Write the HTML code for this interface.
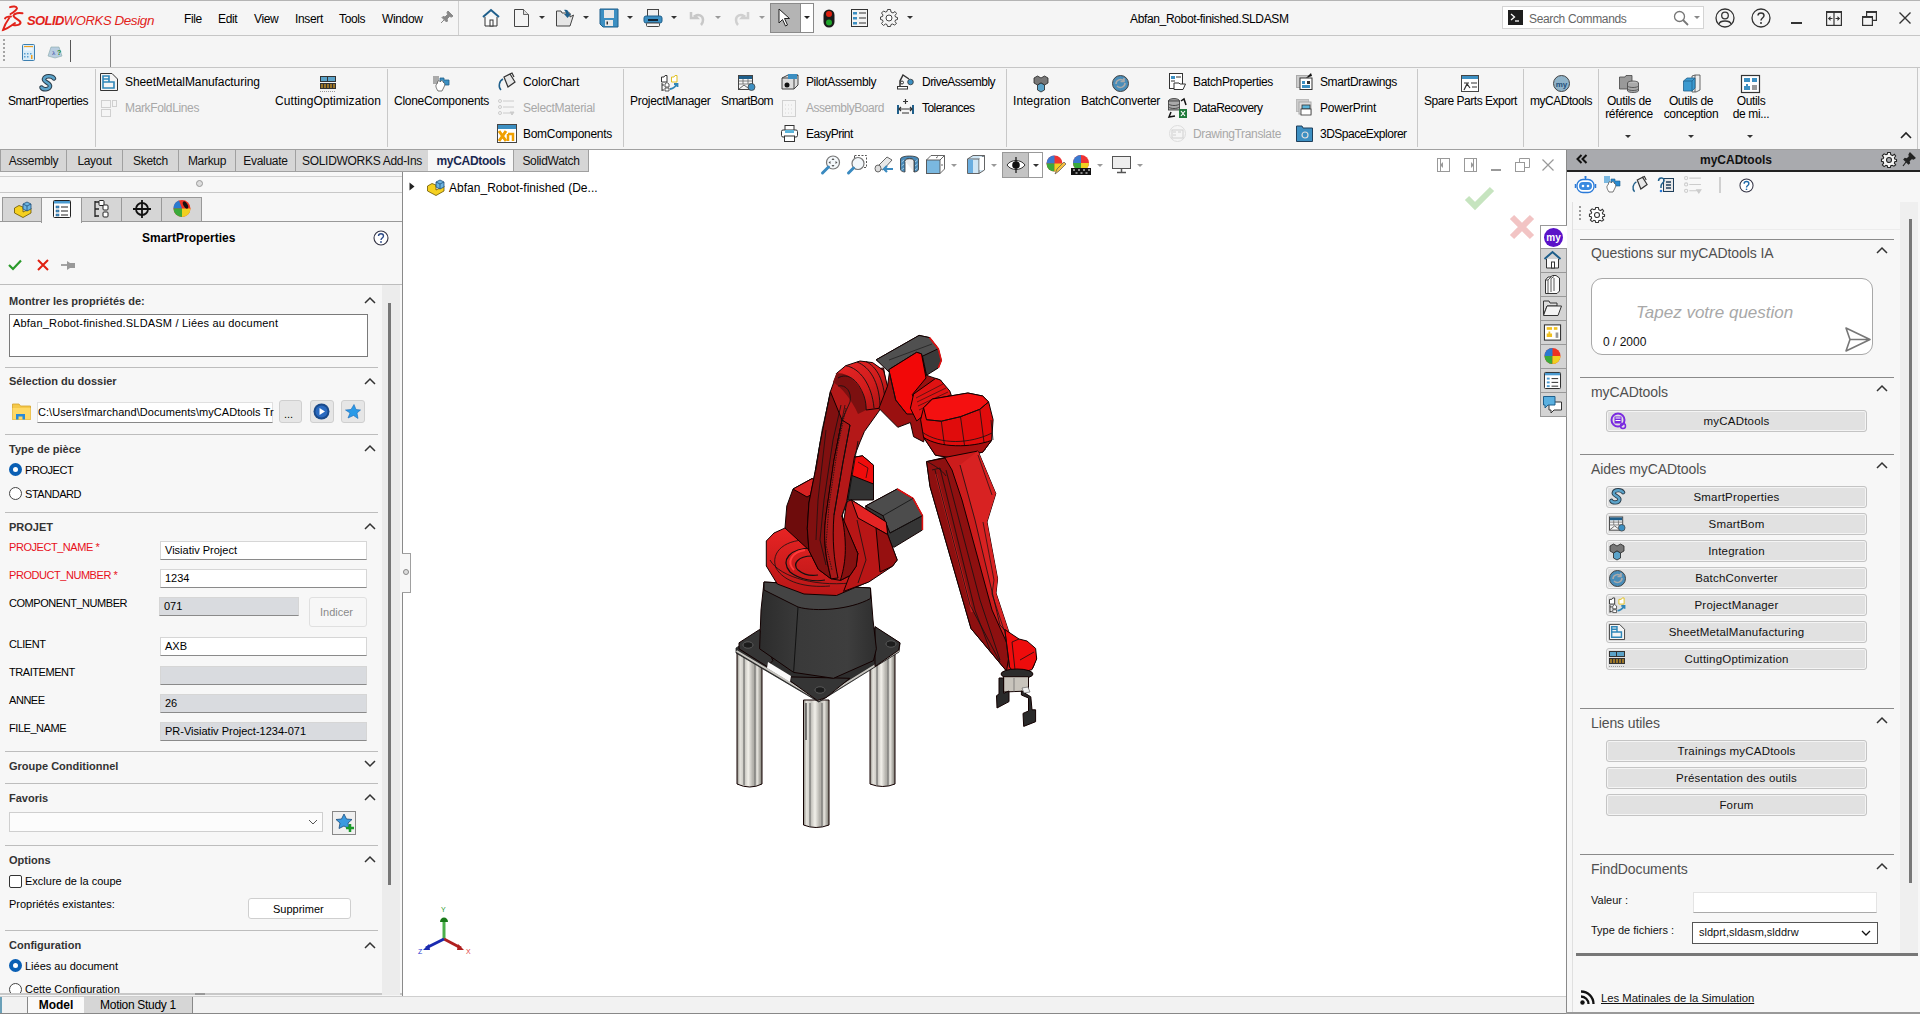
<!DOCTYPE html>
<html><head><meta charset="utf-8">
<style>
*{box-sizing:border-box;margin:0;padding:0}
html,body{width:1920px;height:1014px;overflow:hidden;background:#f5f5f5;font-family:"Liberation Sans",sans-serif;font-size:12px;color:#000}
.a{position:absolute;white-space:nowrap}
.t{position:absolute;white-space:nowrap;line-height:14px;letter-spacing:-0.35px}
.g{color:#a8a8a8}
.vs{position:absolute;width:1px;background:#c8c8c8}
.hs{position:absolute;height:1px;background:#c8c8c8}
svg{position:absolute;overflow:visible}
.dd{position:absolute;width:0;height:0;border-left:3px solid transparent;border-right:3px solid transparent;border-top:3px solid #666}
</style></head><body>

<!-- top border -->
<div class="a" style="left:0;top:0;width:1920px;height:1px;background:#b4b4b4"></div>

<!-- ===== TITLE BAR ===== -->
<div id="titlebar" class="a" style="left:0;top:1px;width:1920px;height:34px;background:#f5f5f5"></div>
<!-- logo -->
<svg style="left:1px;top:5px" width="24" height="24" viewBox="0 0 24 24"><path d="M9 2.2 C12 1 15.5 1.3 16 3.2 C15.5 5 13 7 9.5 9" fill="none" stroke="#e2231a" stroke-width="1.9" stroke-linecap="round"/><path d="M21.5 8.3 C18 7.5 13.5 8 12.5 10.5 C12 13 19 14.5 19.5 17.5 C19.5 20 16 20.5 12 20" fill="none" stroke="#e2231a" stroke-width="2" stroke-linecap="round"/><path d="M10 11.5 C6 11.5 4.5 12.5 4 13.5 M8.5 12.5 C6 16 3.5 20 2 25 C6 24 10 21 14 18" fill="none" stroke="#e2231a" stroke-width="1.9" stroke-linecap="round"/></svg>
<div class="a" style="left:27px;top:12.5px;font-size:13px;line-height:15px;font-weight:bold;font-style:italic;color:#e2231a;letter-spacing:-0.6px">SOLID<span style="font-weight:normal;letter-spacing:-0.3px">WORKS</span> <span style="font-weight:normal;font-size:13.5px;letter-spacing:-0.4px">Design</span></div>
<div class="t" style="left:184px;top:12px">File</div>
<div class="t" style="left:218px;top:12px">Edit</div>
<div class="t" style="left:254px;top:12px">View</div>
<div class="t" style="left:295px;top:12px">Insert</div>
<div class="t" style="left:339px;top:12px">Tools</div>
<div class="t" style="left:382px;top:12px">Window</div>
<svg style="left:440px;top:10px" width="14" height="14" viewBox="0 0 14 14"><path d="M8 1 L13 6 L11.5 7 L9.5 6.5 L7 9 L7.5 11 L6.5 12 L2 7.5 L3 6.5 L5 7 L7.5 4.5 L7 2.5 Z M4 10 L1 13" fill="#888" stroke="#888" stroke-width="1"/></svg>
<div class="a" style="left:458px;top:1px;width:1px;height:34px;background:#d0d0d0"></div>
<!-- home -->
<svg style="left:482px;top:9px" width="18" height="18" viewBox="0 0 18 18"><path d="M1 8 L9 1 L17 8" fill="none" stroke="#1f5f8b" stroke-width="2"/><path d="M3 8 V17 H15 V8" fill="#fafafa" stroke="#333" stroke-width="1"/><rect x="8" y="11" width="3" height="6" fill="#fff" stroke="#333" stroke-width="1"/></svg>
<!-- new -->
<svg style="left:514px;top:9px" width="15" height="18" viewBox="0 0 15 18"><path d="M0.5 0.5 H9.5 L14.5 5.5 V17.5 H0.5 Z" fill="#f4f4f4" stroke="#444" stroke-width="1"/><path d="M9.5 0.5 V5.5 H14.5" fill="#ddd" stroke="#444" stroke-width="0.8"/></svg>
<div class="dd" style="left:539px;top:16px;border-top-color:#333"></div>
<!-- open -->
<svg style="left:556px;top:9px" width="18" height="18" viewBox="0 0 18 18"><path d="M0.5 2 H5 L6 4 H14 V8 L17.5 6 L14 17 H0.5 Z" fill="#e6e6e6" stroke="#444" stroke-width="1"/><path d="M8 1 C11 0 13 2 13 5 L15 5 L11.5 9 L8 5 L10 5 C10 3 9 2 8 1 Z" fill="#1f5f8b"/></svg>
<div class="dd" style="left:583px;top:16px;border-top-color:#333"></div>
<!-- save -->
<svg style="left:600px;top:9px" width="18" height="18" viewBox="0 0 18 18"><path d="M0 0 H18 V18 H3 L0 15 Z" fill="#3c8fc2"/><path d="M0 0 H18 V18 H3 L0 15 Z" fill="none" stroke="#1f5f8b" stroke-width="1"/><rect x="4" y="1" width="10" height="8" fill="#e8e8e8"/><rect x="5" y="11" width="8" height="6" fill="#e8e8e8"/><rect x="6.5" y="12.5" width="1.5" height="3" fill="#333"/></svg>
<div class="dd" style="left:627px;top:16px;border-top-color:#333"></div>
<!-- print -->
<svg style="left:644px;top:9px" width="18" height="18" viewBox="0 0 18 18"><rect x="3.5" y="0.5" width="11" height="7" fill="#f0f0f0" stroke="#444" stroke-width="1"/><rect x="0" y="7" width="18" height="7" rx="2" fill="#3c8fc2" stroke="#1f5f8b" stroke-width="1"/><rect x="4" y="10" width="10" height="2" fill="#123"/><rect x="2.5" y="14" width="13" height="3.5" rx="1" fill="#f4f4f4" stroke="#444" stroke-width="1"/></svg>
<div class="dd" style="left:671px;top:16px;border-top-color:#333"></div>
<!-- undo redo -->
<svg style="left:689px;top:10px" width="17" height="16" viewBox="0 0 17 16"><path d="M2 2 V8 H8 L6 6 C9 4 14 5 14 10 C14 12 13 14 12 15" fill="none" stroke="#c8c8c8" stroke-width="2.5"/></svg>
<div class="dd" style="left:715px;top:16px;border-top-color:#999"></div>
<svg style="left:733px;top:10px" width="17" height="16" viewBox="0 0 17 16"><path d="M15 2 V8 H9 L11 6 C8 4 3 5 3 10 C3 12 4 14 5 15" fill="none" stroke="#d0d0d0" stroke-width="2.5"/></svg>
<div class="dd" style="left:759px;top:16px;border-top-color:#999"></div>
<!-- select -->
<div class="a" style="left:770px;top:3px;width:44px;height:30px;border:1px solid #8a8a8a;background:#fff"></div>
<div class="a" style="left:771px;top:4px;width:30px;height:28px;background:#b4b4b4;border-right:1px solid #8a8a8a"></div>
<svg style="left:778px;top:8px" width="14" height="19" viewBox="0 0 14 19"><path d="M1 1 V15 L4.5 11.5 L7.5 18 L9.5 17 L6.5 10.5 L11.5 10.5 Z" fill="#fff" stroke="#222" stroke-width="1"/></svg>
<div class="dd" style="left:804px;top:16px;border-top-color:#222"></div>
<!-- traffic light -->
<svg style="left:823px;top:9px" width="12" height="19" viewBox="0 0 12 19"><rect x="0.5" y="0.5" width="11" height="18" rx="5.5" fill="#1a1a1a"/><circle cx="6" cy="5" r="3" fill="#e02010"/><circle cx="6" cy="13.5" r="3" fill="#1fa52a"/></svg>
<!-- list -->
<svg style="left:851px;top:9px" width="17" height="18" viewBox="0 0 17 18"><rect x="0.5" y="0.5" width="16" height="17" fill="#f4f4f4" stroke="#333" stroke-width="1"/><rect x="2" y="3" width="4" height="2.5" fill="#3c8fc2"/><rect x="2" y="8" width="4" height="2.5" fill="#3c8fc2"/><rect x="2" y="13" width="4" height="2.5" fill="#3c8fc2"/><path d="M8 4 H15 M8 9 H15 M8 14 H15" stroke="#333" stroke-width="1"/></svg>
<!-- gear -->
<svg style="left:880px;top:9px" width="18" height="18" viewBox="0 0 18 18"><path d="M7.5 0.5 H10.5 L11 3 L13 4 L15 2.5 L16.5 4.5 L15 6.5 L15.5 8 L17.5 8.5 V10.5 L15.5 11 L15 12.5 L16.5 14.5 L14.5 16 L12.5 15 L11 15.5 L10.5 17.5 H7.5 L7 15.5 L5.5 15 L3.5 16.5 L1.5 14.5 L3 12.5 L2.5 11 L0.5 10.5 V8 L2.5 7.5 L3 6 L1.5 4 L3.5 2 L5.5 3 L7 2.5 Z" fill="#f4f4f4" stroke="#444" stroke-width="1"/><circle cx="9" cy="9" r="3" fill="#fff" stroke="#444" stroke-width="1"/></svg>
<div class="dd" style="left:907px;top:16px;border-top-color:#333"></div>
<!-- title -->
<div class="t" style="left:1130px;top:12px">Abfan_Robot-finished.SLDASM</div>
<!-- search -->
<div class="a" style="left:1502px;top:6px;width:202px;height:23px;background:#fff;border:1px solid #d4d4d4"></div>
<svg style="left:1508px;top:10px" width="15" height="15" viewBox="0 0 15 15"><rect width="15" height="15" fill="#1e1e1e"/><path d="M3 4 L6.5 7 L3 10" fill="none" stroke="#fff" stroke-width="1.3"/><path d="M7 11 H11" stroke="#fff" stroke-width="1.3"/></svg>
<div class="t" style="left:1529px;top:12px;color:#666">Search Commands</div>
<svg style="left:1673px;top:10px" width="16" height="16" viewBox="0 0 16 16"><circle cx="6.5" cy="6.5" r="5" fill="none" stroke="#777" stroke-width="1.3"/><path d="M10 10 L15 15" stroke="#777" stroke-width="1.8"/></svg>
<div class="dd" style="left:1694px;top:16px;border-top-color:#888"></div>
<!-- right icons -->
<svg style="left:1715px;top:8px" width="20" height="20" viewBox="0 0 20 20"><circle cx="10" cy="10" r="9" fill="none" stroke="#333" stroke-width="1.3"/><circle cx="10" cy="7.5" r="3.3" fill="none" stroke="#333" stroke-width="1.3"/><path d="M4 16 C5 12 15 12 16 16" fill="none" stroke="#333" stroke-width="1.3"/></svg>
<svg style="left:1751px;top:8px" width="20" height="20" viewBox="0 0 20 20"><circle cx="10" cy="10" r="9" fill="none" stroke="#333" stroke-width="1.3"/><path d="M7 7.5 C7 4 13 4 13 7.5 C13 10 10 10 10 12.5" fill="none" stroke="#333" stroke-width="1.5"/><circle cx="10" cy="15" r="1" fill="#333"/></svg>
<div class="a" style="left:1791px;top:22px;width:11px;height:2px;background:#333"></div>
<svg style="left:1826px;top:11px" width="16" height="15" viewBox="0 0 16 15"><rect x="0.6" y="0.6" width="14.8" height="13.8" fill="none" stroke="#333" stroke-width="1.2"/><path d="M0.6 1.2 H15.4" stroke="#333" stroke-width="1.5"/><path d="M8 1 V14" stroke="#333" stroke-width="1.2"/><path d="M2.5 7.5 H6.5 M13.5 7.5 H9.5" stroke="#333" stroke-width="1.2"/><path d="M2 7.5 L4.5 5 V10 Z M14 7.5 L11.5 5 V10 Z" fill="#333"/></svg>
<svg style="left:1862px;top:11px" width="16" height="15" viewBox="0 0 16 15"><rect x="0.6" y="5.6" width="9.8" height="8.8" fill="#f5f5f5" stroke="#333" stroke-width="1.2"/><path d="M0.6 6.2 H10.4" stroke="#333" stroke-width="1.5"/><path d="M4.6 5.6 V0.6 H14.4 V9.4 H10.4" fill="none" stroke="#333" stroke-width="1.2"/><path d="M4.6 1.2 H14.4" stroke="#333" stroke-width="1.5"/></svg>
<svg style="left:1899px;top:12px" width="12" height="12" viewBox="0 0 12 12"><path d="M0.5 0.5 L11.5 11.5 M11.5 0.5 L0.5 11.5" stroke="#333" stroke-width="1.4"/></svg>
<div class="a" style="left:0;top:35px;width:1920px;height:1px;background:#c6c6c6"></div>

<!-- ===== ROW2 ===== -->
<svg style="left:2px;top:38px" width="4" height="26" viewBox="0 0 4 26"><g fill="#888"><circle cx="2" cy="2" r="1"/><circle cx="2" cy="6" r="1"/><circle cx="2" cy="10" r="1"/><circle cx="2" cy="14" r="1"/><circle cx="2" cy="18" r="1"/><circle cx="2" cy="22" r="1"/></g></svg>
<svg style="left:22px;top:44px" width="13" height="17" viewBox="0 0 13 17"><rect x="0.5" y="0.5" width="12" height="16" rx="1" fill="#d8ecf8" stroke="#3c7fb0"/><rect x="2" y="2" width="9" height="1.2" fill="#f0a020"/><rect x="2.5" y="3.5" width="8" height="3" fill="#eef7ff"/><g fill="#5b9fd0"><rect x="2" y="9" width="1.5" height="1.5"/><rect x="5" y="9" width="1.5" height="1.5"/><rect x="8" y="9" width="1.5" height="1.5"/><rect x="2" y="12" width="1.5" height="1.5"/><rect x="5" y="12" width="1.5" height="1.5"/></g><rect x="9" y="11" width="1.5" height="4" fill="#f0a020"/></svg>
<svg style="left:47px;top:46px" width="16" height="12" viewBox="0 0 16 12"><path d="M1 10 L4 1 H12 L15 10 L8 12 Z" fill="#b8cde0" stroke="#8aa" stroke-width="0.6"/><text x="5" y="9" font-family="Liberation Serif" font-size="7" fill="#2a3a9a">λ</text><text x="10" y="9" font-family="Liberation Sans" font-size="7" font-weight="bold" fill="#1a8a2a">?</text></svg>
<div class="a" style="left:70px;top:40px;width:1px;height:22px;background:#555"></div>
<div class="a" style="left:110px;top:36px;width:1px;height:31px;background:#888"></div>
<div class="a" style="left:0;top:67px;width:1920px;height:1px;background:#c6c6c6"></div>

<!-- ===== RIBBON ===== -->
<div class="a" style="left:1917px;top:68px;width:1px;height:81px;background:#c8c8c8"></div>
<div class="vs" style="left:95px;top:69px;height:78px"></div>
<div class="vs" style="left:387px;top:69px;height:78px"></div>
<div class="vs" style="left:623px;top:69px;height:78px"></div>
<div class="vs" style="left:1006px;top:69px;height:78px"></div>
<div class="vs" style="left:1417px;top:69px;height:78px"></div>
<div class="vs" style="left:1523px;top:69px;height:78px"></div>
<div class="vs" style="left:1598px;top:69px;height:78px"></div>
<!-- large labels -->
<div class="t" style="left:8px;top:94px;letter-spacing:-0.45px">SmartProperties</div>
<div class="t" style="left:275px;top:94px;letter-spacing:0.07px">CuttingOptimization</div>
<div class="t" style="left:394px;top:94px;letter-spacing:-0.29px">CloneComponents</div>
<div class="t" style="left:630px;top:94px;letter-spacing:-0.3px">ProjectManager</div>
<div class="t" style="left:721px;top:94px;letter-spacing:-0.6px">SmartBom</div>
<div class="t" style="left:1013px;top:94px;letter-spacing:0.07px">Integration</div>
<div class="t" style="left:1081px;top:94px;letter-spacing:-0.31px">BatchConverter</div>
<div class="t" style="left:1424px;top:94px;letter-spacing:-0.47px">Spare Parts Export</div>
<div class="t" style="left:1530px;top:94px;letter-spacing:-0.47px">myCADtools</div>
<div class="t" style="left:1599px;top:95px;width:60px;text-align:center;line-height:13px">Outils de<br>référence</div>
<div class="t" style="left:1661px;top:95px;width:60px;text-align:center;line-height:13px">Outils de<br>conception</div>
<div class="t" style="left:1721px;top:95px;width:60px;text-align:center;line-height:13px">Outils<br>de mi...</div>
<div class="dd" style="left:1625px;top:135px;border-top-color:#333"></div>
<div class="dd" style="left:1688px;top:135px;border-top-color:#333"></div>
<div class="dd" style="left:1747px;top:135px;border-top-color:#333"></div>
<svg style="left:1900px;top:132px" width="12" height="7" viewBox="0 0 12 7"><path d="M1 6 L6 1 L11 6" fill="none" stroke="#222" stroke-width="1.6"/></svg>
<!-- small labels -->
<div class="t" style="left:125px;top:75px;letter-spacing:-0.08px">SheetMetalManufacturing</div>
<div class="t g" style="left:125px;top:101px;letter-spacing:-0.36px">MarkFoldLines</div>
<div class="t" style="left:523px;top:75px;letter-spacing:-0.2px">ColorChart</div>
<div class="t g" style="left:523px;top:101px;letter-spacing:-0.29px">SelectMaterial</div>
<div class="t" style="left:523px;top:127px;letter-spacing:-0.29px">BomComponents</div>
<div class="t" style="left:806px;top:75px;letter-spacing:-0.41px">PilotAssembly</div>
<div class="t g" style="left:806px;top:101px;letter-spacing:-0.47px">AssemblyBoard</div>
<div class="t" style="left:806px;top:127px;letter-spacing:-0.5px">EasyPrint</div>
<div class="t" style="left:922px;top:75px;letter-spacing:-0.54px">DriveAssembly</div>
<div class="t" style="left:922px;top:101px;letter-spacing:-0.55px">Tolerances</div>
<div class="t" style="left:1193px;top:75px;letter-spacing:-0.36px">BatchProperties</div>
<div class="t" style="left:1193px;top:101px;letter-spacing:-0.55px">DataRecovery</div>
<div class="t g" style="left:1193px;top:127px;letter-spacing:-0.35px">DrawingTranslate</div>
<div class="t" style="left:1320px;top:75px;letter-spacing:-0.39px">SmartDrawings</div>
<div class="t" style="left:1320px;top:101px;letter-spacing:-0.27px">PowerPrint</div>
<div class="t" style="left:1320px;top:127px;letter-spacing:-0.5px">3DSpaceExplorer</div>
<!-- ribbon icons -->
<!-- S smartproperties -->
<svg style="left:39px;top:75px" width="18" height="18" viewBox="0 0 18 18"><path d="M15 3.5 C13 0.5 6 0.5 5 4 C4 7 12 8 11 11.5 C10 15 4 15 2.5 12.5" fill="none" stroke="#2a3c4a" stroke-width="4.5" stroke-linecap="round"/><path d="M15 3.5 C13 0.5 6 0.5 5 4 C4 7 12 8 11 11.5 C10 15 4 15 2.5 12.5" fill="none" stroke="#5ba3c9" stroke-width="2.5" stroke-linecap="round"/></svg>
<!-- sheetmetal -->
<svg style="left:100px;top:73px" width="18" height="18" viewBox="0 0 18 18"><path d="M0.5 0.5 H12 L17.5 6 V17.5 H0.5 Z" fill="#f4f4f4" stroke="#333" stroke-width="1"/><path d="M3 3 H9 V9 H14 V15 H3 Z M3 9 H9 M3 6 H9" fill="none" stroke="#2f86b8" stroke-width="1.6"/></svg>
<svg style="left:101px;top:100px" width="17" height="17" viewBox="0 0 17 17"><rect x="0.5" y="0.5" width="9" height="7" fill="none" stroke="#d0d0d0"/><rect x="11.5" y="0.5" width="4" height="6" fill="none" stroke="#d0d0d0"/><rect x="0.5" y="9.5" width="9" height="7" fill="none" stroke="#d0d0d0"/></svg>
<!-- cutting -->
<svg style="left:320px;top:76px" width="16" height="17" viewBox="0 0 16 17"><rect x="0" y="0" width="16" height="6" fill="#333"/><rect x="1" y="1" width="6" height="4" fill="#5ba3c9"/><rect x="8" y="1" width="7" height="4" fill="#5ba3c9"/><rect x="0" y="7" width="16" height="6" fill="#333"/><path d="M2 8 V12 M5 8 V12 M8 8 V12 M11 8 V12 M14 8 V12" stroke="#e0a020" stroke-width="1.2"/><path d="M0 15.5 H16" stroke="#999" stroke-dasharray="1 1"/></svg>
<!-- clone -->
<svg style="left:433px;top:75px" width="18" height="17" viewBox="0 0 18 17"><rect x="0" y="1" width="6" height="8" fill="#aaa"/><path d="M7 3 H11 V5 H16 V10 H7 Z" fill="#3c8fc2" stroke="#1f5f8b" stroke-width="0.8"/><path d="M5 16 C3 13 2 10 4 9 L5 6 C6 5 7 6 7 7 L8 6 C9 5 10 6 10 7 L11 8 C12 8 12 10 11 12 L9 16 Z" fill="#fff" stroke="#555" stroke-width="0.8"/></svg>
<!-- colorchart -->
<svg style="left:497px;top:73px" width="19" height="18" viewBox="0 0 19 18"><path d="M7 4 L13 1 L18 9 L11 14 Z" fill="#e8e8e8" stroke="#333" stroke-width="1.2"/><path d="M13 1 L15 0 L17 4" fill="none" stroke="#333" stroke-width="1.2"/><path d="M6 6 C2 8 1 14 4 17" fill="none" stroke="#1f5f8b" stroke-width="1.5"/></svg>
<svg style="left:498px;top:99px" width="17" height="17" viewBox="0 0 17 17"><circle cx="2" cy="2" r="1.5" fill="none" stroke="#ccc"/><circle cx="2" cy="8" r="1.5" fill="none" stroke="#ccc"/><circle cx="2" cy="14" r="1.5" fill="none" stroke="#ccc"/><path d="M5 2 H16 M5 8 H16 M5 14 H12 M12 13 L16 13 L14 16 Z" stroke="#ccc" fill="#ccc"/></svg>
<svg style="left:497px;top:124px" width="20" height="19" viewBox="0 0 20 19"><rect x="0.5" y="0.5" width="19" height="18" fill="#fff" stroke="#444"/><rect x="1" y="1" width="18" height="4" fill="#3c8fc2"/><path d="M2 7 L9 17 M9 7 L2 17" stroke="#f0a000" stroke-width="3"/><path d="M11 10 V17 M11 10 H16 V17" fill="none" stroke="#f0a000" stroke-width="2.5"/></svg>
<!-- projectmanager -->
<svg style="left:661px;top:75px" width="18" height="17" viewBox="0 0 18 17"><path d="M0.5 7 V2 H3 L4 0.5 H6 V7 Z" fill="#fff" stroke="#333"/><path d="M10.5 7 V2 H13 L14 0.5 H16 V7 Z" fill="#fff" stroke="#e0c020"/><path d="M1 8 V16 M1 10 H3 M1 15 H3" stroke="#333"/><path d="M4 12 V9 L6 7.5 L8 9 V12 Z M4 16 V13 H8 V16 Z" fill="#fff" stroke="#333" stroke-width="0.8"/><path d="M9 14 C12 14 14 12 16 9 M13 9 H16.5 V12" fill="none" stroke="#2f86b8" stroke-width="1.8"/></svg>
<!-- smartbom -->
<svg style="left:738px;top:75px" width="18" height="17" viewBox="0 0 18 17"><rect x="0.5" y="0.5" width="14" height="14" fill="#f4f4f4" stroke="#444"/><rect x="1" y="1" width="13" height="3" fill="#1f5f8b"/><path d="M1 6 H14 M1 9 H14 M5 4 V9 M10 4 V9" stroke="#666" stroke-width="0.8"/><path d="M1 14 L6 10 L10 13" fill="none" stroke="#666"/><circle cx="13.5" cy="12" r="3.5" fill="#3c8fc2" stroke="#444" stroke-width="0.8"/></svg>
<!-- pilotassembly -->
<svg style="left:781px;top:73px" width="18" height="18" viewBox="0 0 18 18"><path d="M1 5 L7 2 L17 2 V12 L13 16 H1 Z" fill="#ddd" stroke="#444"/><path d="M1 5 H13 L17 2 M13 5 V16" fill="none" stroke="#444"/><rect x="7" y="1" width="9" height="5" fill="#3c8fc2"/><circle cx="6" cy="12" r="2.5" fill="#111"/></svg>
<svg style="left:782px;top:99px" width="15" height="18" viewBox="0 0 15 18"><rect x="0.5" y="1.5" width="13" height="16" fill="none" stroke="#d0d0d0"/><path d="M3 6 H11 M3 10 H11 M3 14 H11" stroke="#d8d8d8" stroke-dasharray="1 2"/></svg>
<svg style="left:781px;top:125px" width="17" height="17" viewBox="0 0 17 17"><rect x="4" y="0.5" width="9" height="5" fill="#fff" stroke="#333"/><rect x="0.5" y="5" width="16" height="7" rx="1.5" fill="#fff" stroke="#333"/><rect x="4" y="5" width="9" height="3" fill="#5bb4d9"/><rect x="3.5" y="11" width="10" height="5.5" fill="#fff" stroke="#333"/></svg>
<!-- driveassembly -->
<svg style="left:897px;top:73px" width="17" height="17" viewBox="0 0 17 17"><rect x="0.5" y="13.5" width="10" height="2.5" fill="#fff" stroke="#333"/><path d="M3 13 V8 L6 2 L12 6" fill="none" stroke="#333" stroke-width="1.5"/><circle cx="5" cy="9.5" r="1.5" fill="none" stroke="#333"/><circle cx="13.5" cy="9" r="2.8" fill="#3c8fc2" stroke="#333" stroke-width="0.8"/></svg>
<svg style="left:897px;top:99px" width="17" height="15" viewBox="0 0 17 15"><path d="M1 6 V15 M16 6 V15" stroke="#1f5f8b" stroke-width="2"/><path d="M2 10 H15 M4 8 L2 10 L4 12 M13 8 L15 10 L13 12 M8.5 0 V5 M6 2.5 H11 M5 14 H12" fill="none" stroke="#333" stroke-width="1.2"/></svg>
<!-- integration -->
<svg style="left:1033px;top:75px" width="16" height="17" viewBox="0 0 16 17"><path d="M1 3 L4.5 1 L8 3 L11.5 1 L15 3 V8 L11.5 10 L8 8 L4.5 10 L1 8 Z" fill="#777" stroke="#222" stroke-width="0.8"/><path d="M4.5 10 L8 8 L11.5 10 V15 L8 17 L4.5 15 Z" fill="#5ba3c9" stroke="#222" stroke-width="0.8"/></svg>
<!-- batchconverter -->
<svg style="left:1112px;top:75px" width="17" height="17" viewBox="0 0 17 17"><circle cx="8.5" cy="8.5" r="8" fill="#4a8db8" stroke="#444" stroke-width="1"/><path d="M4 9 C4 5 9 3 12 6 M12 3 V6.5 H8.5 M13 8 C13 12 8 14 5 11" fill="none" stroke="#aaa" stroke-width="1.6"/></svg>
<!-- batchproperties -->
<svg style="left:1169px;top:73px" width="17" height="17" viewBox="0 0 17 17"><rect x="0.5" y="0.5" width="13" height="15" fill="#fff" stroke="#333"/><rect x="2" y="3" width="4" height="3" fill="#3c8fc2"/><path d="M7 4 H12 M2 8 H6" stroke="#333"/><path d="M5 10 H10 L11 11 H16.5 L14 16.5 H5 Z" fill="#fff" stroke="#333"/></svg>
<svg style="left:1168px;top:98px" width="19" height="20" viewBox="0 0 19 20"><ellipse cx="6" cy="3" rx="5.5" ry="2.5" fill="#999" stroke="#333" stroke-width="0.8"/><rect x="0.5" y="3" width="11" height="9" fill="#aaa" stroke="#333" stroke-width="0.8"/><path d="M0.5 6 C3 8 9 8 11.5 6 M0.5 9 C3 11 9 11 11.5 9" fill="none" stroke="#333" stroke-width="0.8"/><rect x="11" y="11" width="8" height="9" fill="#1f7a3a"/><path d="M13 13 L17 18 M17 13 L13 18" stroke="#fff" stroke-width="1.2"/><path d="M3 14 L1 19 L7 18 M13 3 L16 1 L18 7" fill="none" stroke="#111" stroke-width="1.5"/></svg>
<svg style="left:1169px;top:125px" width="17" height="17" viewBox="0 0 17 17"><circle cx="8.5" cy="8.5" r="8" fill="none" stroke="#ddd"/><rect x="3" y="5" width="11" height="8" fill="none" stroke="#d0d0d0"/><path d="M4 7 H7 M9 7 H12 M4 10 H7" stroke="#d0d0d0"/></svg>
<!-- smartdrawings -->
<svg style="left:1296px;top:73px" width="17" height="17" viewBox="0 0 17 17"><rect x="0.5" y="2.5" width="12" height="12" fill="#ccc" stroke="#aaa"/><rect x="4" y="5" width="12" height="11.5" fill="#fff" stroke="#333"/><rect x="6" y="8" width="3" height="3" fill="#3c8fc2"/><rect x="11" y="8" width="3" height="3" fill="#333"/><rect x="6" y="12" width="8" height="3" fill="#3c8fc2"/><path d="M10 5 L15 0 L16 3" fill="#111"/></svg>
<svg style="left:1296px;top:99px" width="17" height="17" viewBox="0 0 17 17"><rect x="0.5" y="0.5" width="12" height="12" fill="#ccc" stroke="#bbb"/><rect x="3" y="3" width="12" height="12" fill="#ddd" stroke="#aaa"/><rect x="6" y="6" width="8" height="4" fill="#5bb4d9" stroke="#333" stroke-width="0.8"/><rect x="5" y="10" width="10" height="6" fill="#fff" stroke="#333" stroke-width="0.8"/></svg>
<svg style="left:1296px;top:125px" width="17" height="17" viewBox="0 0 17 17"><path d="M0.5 1 H6 L7 3 H16.5 V16.5 H0.5 Z" fill="#3c8fc2" stroke="#1f3f5b" stroke-width="1"/><circle cx="9" cy="10" r="3" fill="none" stroke="#ddd" stroke-width="1.2"/></svg>
<!-- spare parts -->
<svg style="left:1461px;top:75px" width="18" height="17" viewBox="0 0 18 17"><rect x="0.5" y="0.5" width="17" height="16" fill="#fff" stroke="#444"/><rect x="1" y="1" width="16" height="3" fill="#3c8fc2"/><path d="M3 15 L6 9 L9 13 M3 8 H8 M10 8 H16 M11 12 H16" fill="none" stroke="#333" stroke-width="1.2"/></svg>
<!-- mycadtools -->
<svg style="left:1553px;top:75px" width="17" height="17" viewBox="0 0 17 17"><circle cx="8.5" cy="8.5" r="8" fill="#8fb3c9" stroke="#444" stroke-width="1"/><text x="8.5" y="11.5" font-family="Liberation Sans" font-size="8" font-weight="bold" text-anchor="middle" fill="#1f4f7b">my</text></svg>
<!-- outils -->
<svg style="left:1619px;top:75px" width="20" height="18" viewBox="0 0 20 18"><path d="M0.5 2 H6 L7 0.5 H13 V14 H0.5 Z" fill="#999" stroke="#444" stroke-width="0.8"/><ellipse cx="14" cy="8" rx="5.5" ry="2" fill="#bbb" stroke="#444" stroke-width="0.8"/><path d="M8.5 8 V16 C10 18 18 18 19.5 16 V8 M8.5 11 C10 13 18 13 19.5 11 M8.5 14 C10 16 18 16 19.5 14" fill="#aaa" stroke="#444" stroke-width="0.8"/></svg>
<svg style="left:1683px;top:75px" width="18" height="18" viewBox="0 0 18 18"><path d="M9 1 L12 0 H17 V15 L13 17 H9 Z" fill="#eee" stroke="#444" stroke-width="0.8"/><path d="M12 0 V17" stroke="#444" stroke-width="0.8"/><path d="M0.5 6 L4 3 H12 V13 L9 16 H0.5 Z" fill="#3c9ad0" stroke="#1f5f8b" stroke-width="0.8"/><path d="M0.5 6 H9 L12 3 M9 6 V16" fill="none" stroke="#1f5f8b" stroke-width="0.8"/></svg>
<svg style="left:1741px;top:75px" width="19" height="18" viewBox="0 0 19 18"><rect x="0.5" y="0.5" width="18" height="17" fill="#fff" stroke="#333" stroke-width="1.2"/><rect x="3" y="3" width="6" height="4" fill="#3c8fc2"/><rect x="11" y="3" width="5" height="4" fill="#3c8fc2"/><path d="M3 15 V11 H5 V9 H7 V11 H9 V15 Z" fill="#3c8fc2"/><rect x="11" y="10" width="5" height="5" fill="#999"/></svg>

<div id="gfx" class="a" style="left:402px;top:150px;width:1165px;height:847px;background:#fff;border-left:1px solid #8a8a8a"></div>
<!-- ROBOT -->
<svg style="left:0;top:0" width="1920" height="1014" viewBox="0 0 1920 1014">
<defs>
<linearGradient id="leg" x1="0" x2="1" y1="0" y2="0"><stop offset="0" stop-color="#8a8880"/><stop offset="0.12" stop-color="#e6e4de"/><stop offset="0.3" stop-color="#c4c2bc"/><stop offset="0.45" stop-color="#f2f0ea"/><stop offset="0.65" stop-color="#aeaca6"/><stop offset="0.82" stop-color="#e0ded8"/><stop offset="1" stop-color="#7a7870"/></linearGradient>
<linearGradient id="base" x1="0" x2="1" y1="0" y2="0"><stop offset="0" stop-color="#2c2c2c"/><stop offset="0.35" stop-color="#3a3a3a"/><stop offset="0.75" stop-color="#3e3e3e"/><stop offset="1" stop-color="#2e2e2e"/></linearGradient>
<linearGradient id="disc" x1="0" x2="0" y1="0" y2="1"><stop offset="0" stop-color="#e82424"/><stop offset="1" stop-color="#b81616"/></linearGradient>
<linearGradient id="elb" x1="0" x2="1" y1="0" y2="1"><stop offset="0" stop-color="#e82626"/><stop offset="0.6" stop-color="#d01c1c"/><stop offset="1" stop-color="#a01212"/></linearGradient>
</defs>
<g stroke="#120000" stroke-width="1" stroke-linejoin="round">
<!-- legs -->
<path d="M737 653 H762 V784 Q750 790 737 784 Z" fill="url(#leg)"/>
<path d="M870 651 H895 V784 Q883 789 870 784 Z" fill="url(#leg)"/>
<path d="M803.5 700 H829 V825 Q816 830 803.5 825 Z" fill="url(#leg)"/>
<path d="M744 657 V785 M755 657 V786 M877 655 V785 M888 655 V786 M810 703 V827 M822 703 V827" stroke="#444" stroke-width="0.8"/>
<path d="M806 703 V740" stroke="#333" stroke-width="1.2"/>
<!-- plate -->
<path d="M736 648 L760 633 L876 628 L900 643 L899 652 L818.8 702 L736 653 Z" fill="#2e2e2e" stroke="#222" stroke-width="0.8"/>
<path d="M736.5 651 L818.8 700 L899 650.5" fill="none" stroke="#c8c6c0" stroke-width="2"/>
<path d="M739 642.8 L759.6 629.5 L772.9 660.6 L767 666.5 L739 648.8 Z" fill="#353535"/>
<path d="M790.7 676.9 L849.8 678.3 L826 697.6 L817.3 700.5 L790.7 681.3 Z" fill="#353535"/>
<path d="M875 626.6 L900 642.8 L898.6 650.2 L875 666.5 Z" fill="#353535"/>
<path d="M768 662 L791 676 L790 682 L767 668 Z" fill="#fafafa" stroke="none"/>
<ellipse cx="748" cy="645" rx="5" ry="3.2" fill="#1c1c1c" stroke="#777" stroke-width="0.6"/><ellipse cx="820" cy="690" rx="5" ry="3.2" fill="#1c1c1c" stroke="#777" stroke-width="0.6"/><ellipse cx="891" cy="644" rx="5" ry="3.2" fill="#1c1c1c" stroke="#777" stroke-width="0.6"/>
<!-- base cone -->
<path d="M764 582 L870.5 588 L873 620 L876.4 648.8 L873.5 660.6 L833.5 678.3 L793.6 672.4 L759.6 648.8 L761 610 Z" fill="url(#base)"/>
<path d="M764 582 L870.5 588 L870.5 598.5 C850 610 815 612 798 607 L764 590 Z" fill="#444"/>
<path d="M798 607 L793.6 672.4" fill="none" stroke="#111"/>
<!-- turntable disc -->
<path d="M766.3 541 L774 533 L785 528 L860 540 C880 555 885 570 868 582 L836.5 595.5 L804 594 L777.3 584 L766.3 566 Z" fill="url(#disc)"/>
<path d="M770 560 C780 578 820 588 858 582" fill="none" stroke="#111" stroke-width="0.8"/>
<path d="M812 548 C790 548 780 560 790 572 C800 580 815 582 825 580" fill="none" stroke="#111" stroke-width="1.2"/>
<path d="M812 556 C798 556 792 564 798 570 C804 575 812 576 818 575" fill="none" stroke="#111" stroke-width="1.2"/>
<path d="M813 540 C785 538 770 552 776 568 C784 582 805 588 830 586" fill="none" stroke="#111" stroke-width="0.8"/>
<path d="M805 550 C792 552 786 562 794 570" fill="none" stroke="#ff3a3a" stroke-width="2"/>
<!-- link1 dark left box -->
<path d="M786.8 506 L793 489 L812 478.6 L840 492 L843 522 L808.9 550 L785 528 Z" fill="#6e0c0c"/>
<path d="M793 489 L812 478.6 L826 486 L807 497 Z" fill="#d82222"/>
<!-- small black box behind -->
<path d="M849 458 L862.5 455.8 L873.5 465.2 L873.5 500 L846 500 Z" fill="#333"/>
<path d="M850 458 L862.5 455.8 L873.5 465.2 L873.5 484 L850 474.7 Z" fill="#f00c0c"/>
<path d="M858 462 L868 468 L866 478" fill="none" stroke="#111" stroke-width="0.7"/>
<!-- lower motor -->
<path d="M865.6 506 L897.2 489 L913 498.4 L922.4 515.7 L922.4 530 L894 547.3 L870 535 Z" fill="#353535"/>
<path d="M865.6 506 L897.2 489 L913 498.4 L922.4 515.7 L890 533 L883 515.7 Z" fill="#4c4c4c"/>
<path d="M897.2 489 L913 498.4 L922.4 515.7 L922.4 530" fill="none" stroke="#e01010" stroke-width="1.6"/>
<path d="M883 515.7 L913 498.4 M890 533 L922.4 515.7" fill="none" stroke="#111" stroke-width="0.8"/>
<!-- right red box -->
<path d="M846.7 501.5 L851.5 500 L886.2 522 L887.7 534.6 L897.2 560 L892.5 566.2 L868.8 582 L843.6 591.4 L857.8 553.6 L843.6 522 Z" fill="#b81616"/>
<path d="M851.5 500 L886.2 522 L887.7 534.6 L876 528 L858 518 Z" fill="#e42424"/>
<path d="M876 528 L887.7 534.6 L897.2 560 L892.5 566.2 L880 572 Z" fill="#961010"/>
<path d="M857 520 L866 560 L858 583" fill="none" stroke="#111" stroke-width="0.8"/>
<!-- link2 lower arm -->
<path d="M836.3 375.3 L830.4 391.6 L825.9 413.8 L820 443.3 L815.2 471.5 L808.9 503 L807.3 528.3 L808.9 550.4 L818.3 569.3 L831 578.8 L840.4 580.4 L849.9 575.6 L856.2 566.2 L857.8 553.6 L843.6 522 L842 515.7 L846.7 501.5 L854.6 455.8 L860 441.9 L864.4 431.5 L879.2 410.8 L888 396 L883.6 367.9 Z" fill="#b41818"/>
<path d="M830.4 391.6 L825.9 413.8 L820 443.3 L815.2 471.5 L808.9 503 L807.3 528.3 L808.9 550.4 L818.3 569.3 L831 578.8 C828 565 822 545 826 515 L834 460 L842 420 Z" fill="#801010"/>
<path d="M842 420 L834 460 L826 515 C822 545 828 565 831 578.8 L838 578 C834 560 832 540 834 515 L843 462 L850 425 Z" fill="#a81818"/>
<path d="M850 425 L843 462 L834 515 M858 441 L848 500 L842 516" fill="none" stroke="#111" stroke-width="0.9"/>
<path d="M826 430 L818 500 L816 540 M845 405 L838 440" fill="none" stroke="#111" stroke-width="0.7"/>
<path d="M842 516 L857.8 553.6 L856.2 566.2 L849.9 575.6 L840.4 580.4 C845 565 848 548 842 516 Z" fill="#861010"/>
<!-- elbow disc -->
<path d="M836.3 373.6 L845.7 365.7 L860 361 L872.6 362.6 L883.6 370.5 L887.5 386.2 L886 400.4 L878.9 408.3 L866.2 410 C858 400 850 388 836.3 373.6 Z" fill="url(#elb)"/>
<path d="M836.3 373.6 C845 372 855 378 862 392 C866 400 866.2 405 866.2 410 L858 414 C852 400 842 388 833 382 Z" fill="#7c1010" stroke="none"/>
<path d="M838 378 C848 372 858 380 864 396 C866 402 866 406 866.2 410" fill="none" stroke="#111" stroke-width="0.9"/>
<path d="M845.7 365.7 C860 368 872 385 874 408 M857 362 C870 367 879 382 880 405 M866 361.5 C877 367 884 380 885 402" fill="none" stroke="#111" stroke-width="0.9"/>
<path d="M838 386 C846 384 852 392 850 402 L842 420" fill="none" stroke="#111" stroke-width="0.8"/>
<!-- upper motor -->
<path d="M876.2 359.8 L919.1 335.4 L929.5 337.6 L938.3 348.7 L941.3 360.5 L938.3 367.9 L926.5 375.3 L922 354 L889 370 Z" fill="#3a3a3a"/>
<path d="M876.2 359.8 L919.1 335.4 L929.5 337.6 L938.3 348.7 L889 372 Z" fill="#505050"/>
<path d="M889 360 L932 344" stroke="#222" stroke-width="0.8"/>
<path d="M929.5 337.6 L938.3 348.7 L941.3 360.5 L938.3 367.9" fill="none" stroke="#e01010" stroke-width="1.6"/>
<!-- bracket -->
<path d="M878.9 408.3 L887.5 386.2 L889.9 368.9 L916.7 352.3 L921.5 353.9 L926.2 375.2 L935.6 378.4 L940.4 380 L951.4 395.7 L924.6 414.6 L926 431 L923.6 441.9 L913.6 436.7 L910.4 422.5 L897.8 427.3 L888.3 417.8 Z" fill="#9a1010"/>
<path d="M888.8 369.7 L916.7 352.3 L921.5 353.9 L926 378 L912.3 394.6 L920.6 414 L906.8 414 L895.7 400 Z" fill="#f20808"/>
<path d="M913.6 394.1 L935.6 378.4 L940.4 380 L949.8 391 L951.4 395.7 L924.6 414.6 L916.7 421 L910.4 408.3 Z" fill="#e01212"/>
<path d="M916 398 L943 384 M917 402 L946 388 M918 406 L948 392 M919 410 L950 395" fill="none" stroke="#111" stroke-width="0.6"/>
<path d="M888.8 369.7 L895.7 400 L906.8 414" fill="none" stroke="#111" stroke-width="0.8"/>
<!-- forearm drum -->
<path d="M923.6 407.8 L932.4 399 L967.9 393 L982.7 396 L988.6 401.9 L993.1 419.7 L991.6 440.4 L982.7 452.2 L953.1 458.1 L935.4 455.2 L923.6 437.4 L920.6 419.7 Z" fill="#e00c0c"/>
<path d="M932.4 399 L967.9 393 L982.7 396 L988.6 401.9 L979.8 409.3 L960.5 416.7 L941.3 421.2 L926.5 419.7 L923.6 407.8 Z" fill="#f41010"/>
<path d="M926.5 419.7 L941.3 421.2 L960.5 416.7 L979.8 409.3 L988.6 401.9 M941.3 421.2 L946 457 M960.5 416.7 L966 456 M979.8 409.3 L985 450 M991 420 L993 440 M922 432 C940 445 970 444 992 433" fill="none" stroke="#111" stroke-width="0.8"/>
<path d="M923.6 437.4 L935.4 455.2 L953.1 458.1 L982.7 452.2 L991.6 440.4 C970 448 940 448 923.6 437.4 Z" fill="#a81010"/>
<!-- forearm -->
<path d="M926.6 461.6 L942 458 L978 451 L995.8 493.6 L987 522 L997.6 578.8 L996 593 L1010 635.6 L1024 642.7 L1036.7 657 L1033 667.5 L1017 674.6 L1006.5 671 L971 628.5 L930 486.5 Z" fill="#cc1c1c"/>
<path d="M926.6 461.6 L945 458 L952 470 L962 500 L992 610 L1010 650 L1006.5 671 L971 628.5 L930 486.5 Z" fill="#8e1010"/>
<path d="M932 470 L940 468 L975 610 L990 650 M946 470 L980 600 L1000 660" fill="none" stroke="#111" stroke-width="0.8"/>
<path d="M936 474 L972 612" fill="none" stroke="#c82020" stroke-width="2"/>
<path d="M978 451 L995.8 493.6 L987 522 L997.6 578.8 L996 593 L1010 635.6 L1000 625 L975 520 L960 465 Z" fill="#d82222" stroke="none"/>
<path d="M960 465 L975 520 L1000 625 L1010 635.6" fill="none" stroke="#111" stroke-width="0.8"/>
<path d="M1010 635.6 L1024 642.7 L1036.7 657 L1033 667.5 L1017 674.6 L1014 650 Z" fill="#ee1010"/>
<path d="M1014 650 L1017 674.6 M1022 648 L1026 670" fill="none" stroke="#111" stroke-width="0.8"/>
<!-- detail lines -->
<path d="M841 405 L833 440 L824 500 L820 540 L826 565" fill="none" stroke="#111" stroke-width="0.8"/>
<path d="M846 408 L838 445 L829 505 L826 545 L832 570" fill="none" stroke="#111" stroke-width="0.8" stroke-dasharray="1.5 1"/>
<path d="M830 395 L822 430 L816 470" fill="none" stroke="#111" stroke-width="0.7"/>
<path d="M935 470 L970 605 L1000 662" fill="none" stroke="#111" stroke-width="0.8"/>
<path d="M978 455 L992 495 M983 522 L994 580 L992 594 L1004 630" fill="none" stroke="#111" stroke-width="0.7"/>
<path d="M928 462 C935 466 942 470 946 476" fill="none" stroke="#111" stroke-width="0.8"/>
<!-- gripper -->
<path d="M1004.8 629.5 L1019 639 L1027 641 L1035.6 648.4 L1036.7 659 L1032 669.6 L1015.5 674.4 L1009.5 667 Z" fill="#ee0c0c"/>
<path d="M1009.5 667 L1004.8 629.5 M1015.5 674.4 L1012 642 L1019 639 M1020 660 L1034 652" fill="none" stroke="#111" stroke-width="0.8"/>
<ellipse cx="1017" cy="674" rx="16" ry="5" fill="#2c2c2c"/>
<path d="M1003.6 676.7 L1028.5 676.7 L1028.5 691 L1003.6 692 Z" fill="#c8c4bc"/>
<path d="M1014 678 V692" stroke="#666" stroke-width="0.7"/>
<path d="M999 678 L1003.6 678 L1003.6 693.3 L1009 691 L1009 701.6 L997 708 L996.5 695.7 L999 694 Z" fill="#2a2a2a"/>
<path d="M1021.4 691 L1030.8 696.8 L1032 709.8 L1035.6 709.8 L1035.6 721.7 L1023.7 726.4 L1023 713.4 L1028.5 711 L1028.5 698 L1021.4 695 Z" fill="#2a2a2a"/>
<path d="M1022 688 L1028 687 L1030 692 L1024 693 Z" fill="#eee" stroke="#555" stroke-width="0.6"/>
</g>
</svg>
<!-- ===== TAB BAR ===== -->
<div class="a" style="left:0;top:149px;width:1920px;height:1px;background:#a0a0a0"></div>
<style>
.tab{position:absolute;top:150px;height:22px;background:#d6d6d6;border:1px solid #a0a0a0;border-top:none;line-height:22px;text-align:center;font-size:12px;color:#111;letter-spacing:-0.3px}
.ptab{position:absolute;top:197px;height:25px;width:41px;background:#d6d6d6;border:1px solid #999}
.lt{position:absolute;white-space:nowrap;font-size:11px;line-height:13px;color:#000}
.cp{letter-spacing:-0.45px}
.hd{position:absolute;white-space:nowrap;font-size:11px;line-height:13px;font-weight:bold;color:#333}
.ln{position:absolute;left:5px;width:373px;height:1px;background:#bdbdbd}
.chev{position:absolute;left:364px}
.tb{position:absolute;left:160px;width:207px;height:19px;background:#fff;border:1px solid #d6d6d6;border-bottom:1px solid #8a8a8a}
.tbg{background:#d9dbdf}
.rad{position:absolute;left:9px;width:13px;height:13px;border-radius:50%;border:1px solid #333;background:#fff}
.radon{border:4px solid #0a5fb4}
</style>
<div class="tab" style="left:0;width:67px">Assembly</div>
<div class="tab" style="left:66px;width:57px">Layout</div>
<div class="tab" style="left:122px;width:57px">Sketch</div>
<div class="tab" style="left:178px;width:58px">Markup</div>
<div class="tab" style="left:235px;width:61px">Evaluate</div>
<div class="tab" style="left:295px;width:134px">SOLIDWORKS Add-Ins</div>
<div class="tab" style="left:428px;width:86px;background:#f7f7f7;border-left:none;border-right:none;font-weight:bold;color:#1a2850">myCADtools</div>
<div class="tab" style="left:513px;width:76px">SolidWatch</div>

<!-- ===== LEFT PANEL ===== -->
<div class="a" style="left:0;top:172px;width:402px;height:823px;background:#f7f7f7"></div>
<div class="a" style="left:0;top:176px;width:402px;height:1px;background:#cfcfcf"></div>
<div class="a" style="left:196px;top:180px;width:7px;height:7px;border-radius:50%;background:#ddd;border:1px solid #999"></div>
<div class="a" style="left:0;top:192px;width:402px;height:1px;background:#c8c8c8"></div>
<div class="a" style="left:0;top:221px;width:402px;height:1px;background:#999"></div>
<div class="ptab" style="left:2px"></div>
<div class="ptab" style="left:41px;background:#f7f7f7;border-bottom:none;height:26px"></div>
<div class="ptab" style="left:81px"></div>
<div class="ptab" style="left:121px"></div>
<div class="ptab" style="left:161px"></div>
<!-- panel tab icons -->
<svg style="left:14px;top:200px" width="18" height="18" viewBox="0 0 18 18"><path d="M0.5 8 L5 5.5 L9 7 V12 L17 8 V13 L9 17.5 L0.5 13 Z" fill="#f5d020" stroke="#6a5500" stroke-width="0.8"/><path d="M9 4 L13 2 L17 4 V9 L13 11 L9 9 Z" fill="#6cb4e0" stroke="#1f4f7b" stroke-width="0.8"/><path d="M9 4 L13 6 L17 4 M13 6 V11" fill="none" stroke="#1f4f7b" stroke-width="0.8"/></svg>
<svg style="left:53px;top:200px" width="18" height="18" viewBox="0 0 18 18"><rect x="0.5" y="0.5" width="17" height="17" rx="1" fill="#fff" stroke="#222"/><rect x="1" y="1" width="16" height="2.5" fill="#4a9ad0"/><rect x="3" y="6" width="3" height="2" fill="#4a9ad0" stroke="#1f4f7b" stroke-width="0.5"/><rect x="3" y="10" width="3" height="2" fill="#4a9ad0" stroke="#1f4f7b" stroke-width="0.5"/><rect x="3" y="14" width="3" height="2" fill="#4a9ad0" stroke="#1f4f7b" stroke-width="0.5"/><path d="M8 7 H15 M8 11 H15 M8 15 H15" stroke="#222"/></svg>
<svg style="left:94px;top:200px" width="15" height="18" viewBox="0 0 15 18"><path d="M1 1 V17 M1 2 H5 M1 9 H5 M1 16 H5" stroke="#222" stroke-width="1.3" fill="none"/><rect x="5" y="0.5" width="5" height="5" rx="1" fill="#fff" stroke="#222"/><rect x="9" y="5" width="5" height="5" rx="1" fill="#fff" stroke="#222"/><rect x="9" y="12" width="5" height="5" rx="1" fill="#fff" stroke="#222"/></svg>
<svg style="left:133px;top:200px" width="18" height="18" viewBox="0 0 18 18"><circle cx="9" cy="9" r="6" fill="none" stroke="#111" stroke-width="1.8"/><path d="M9 0 V18 M0 9 H18" stroke="#111" stroke-width="1.8"/></svg>
<svg style="left:173px;top:199px" width="18" height="19" viewBox="0 0 18 19"><circle cx="9" cy="9.5" r="8.5" fill="#e32"/><path d="M9 9.5 L0.5 9.5 A8.5 8.5 0 0 1 6 1.5 Z" fill="#2a7ad0"/><path d="M9 9.5 L0.5 9.5 A8.5 8.5 0 0 0 9 18 Z" fill="#3aaa3a"/><path d="M9 9.5 L9 18 A8.5 8.5 0 0 0 17.5 9.5 Z" fill="#f0d020"/><ellipse cx="12.5" cy="6" rx="2" ry="4" transform="rotate(-30 12.5 6)" fill="#111"/></svg>
<div class="a" style="left:142px;top:231px;font-size:12px;font-weight:bold;line-height:14px">SmartProperties</div>
<svg style="left:373px;top:230px" width="16" height="16" viewBox="0 0 16 16"><circle cx="8" cy="8" r="7" fill="#fff" stroke="#334" stroke-width="1.1"/><path d="M5.5 6 C5.5 3 10.5 3 10.5 6 C10.5 8 8 8 8 10" fill="none" stroke="#2a4a8a" stroke-width="1.4"/><circle cx="8" cy="12" r="0.9" fill="#2a4a8a"/></svg>
<svg style="left:8px;top:259px" width="14" height="12" viewBox="0 0 14 12"><path d="M1 6 L5 10 L13 1.5" fill="none" stroke="#2a9a2a" stroke-width="2.2"/></svg>
<svg style="left:37px;top:259px" width="12" height="12" viewBox="0 0 12 12"><path d="M1 1 L11 11 M11 1 L1 11" stroke="#e02010" stroke-width="2"/></svg>
<svg style="left:61px;top:259px" width="15" height="12" viewBox="0 0 15 12"><path d="M0 6 H8" stroke="#888" stroke-width="1.5"/><path d="M6 2 L9 4 H14 V9 H9 L6 11 Z" fill="#999"/></svg>
<div class="a" style="left:0;top:284px;width:402px;height:1px;background:#bdbdbd"></div>
<!-- scrollbar -->
<div class="a" style="left:388px;top:303px;width:3px;height:582px;background:#777"></div>
<!-- sections -->
<div class="hd" style="left:9px;top:295px">Montrer les propriétés de:</div>
<svg class="chev" style="top:296px" width="12" height="8" viewBox="0 0 12 8"><path d="M1 7 L6 2 L11 7" fill="none" stroke="#333" stroke-width="1.5"/></svg>
<div class="a" style="left:9px;top:314px;width:359px;height:43px;background:#fff;border:1px solid #7a7a7a"></div>
<div class="lt" style="left:13px;top:317px;letter-spacing:0.19px">Abfan_Robot-finished.SLDASM / Liées au document</div>
<div class="ln" style="top:367px"></div>
<div class="hd" style="left:9px;top:375px">Sélection du dossier</div>
<svg class="chev" style="top:377px" width="12" height="8" viewBox="0 0 12 8"><path d="M1 7 L6 2 L11 7" fill="none" stroke="#333" stroke-width="1.5"/></svg>
<svg style="left:12px;top:403px" width="19" height="17" viewBox="0 0 19 17"><path d="M0.5 1 H7 L8.5 3 H18.5 V16.5 H0.5 Z" fill="#f5c94a" stroke="#d4a22a" stroke-width="0.8"/><rect x="0.5" y="5" width="18" height="11.5" fill="#ffd966"/><path d="M4 16.5 V11 H13 V16.5 H10.5 V13.5 H6.5 V16.5 Z" fill="#2a8ad8"/></svg>
<div class="a" style="left:37px;top:402px;width:236px;height:21px;background:#fff;border:1px solid #e0e0e0;border-bottom:1px solid #888"></div>
<div class="lt" style="left:38px;top:406px;font-size:11px;letter-spacing:0.05px">C:\Users\fmarchand\Documents\myCADtools Tr</div>
<div class="a" style="left:279px;top:400px;width:23px;height:23px;background:#e6e6e6;border:1px solid #cfcfcf;border-radius:3px"></div>
<div class="lt" style="left:284px;top:408px">...</div>
<div class="a" style="left:310px;top:400px;width:24px;height:23px;background:#e6e6e6;border:1px solid #cfcfcf;border-radius:3px"></div>
<svg style="left:313px;top:403px" width="17" height="17" viewBox="0 0 17 17"><circle cx="8.5" cy="8.5" r="8" fill="#1a4a8a"/><circle cx="8.5" cy="8.5" r="6" fill="#2a6ac0"/><path d="M6.5 5 L12 8.5 L6.5 12 Z" fill="#fff"/></svg>
<div class="a" style="left:341px;top:400px;width:24px;height:23px;background:#e6e6e6;border:1px solid #cfcfcf;border-radius:3px"></div>
<svg style="left:345px;top:404px" width="16" height="15" viewBox="0 0 16 15"><path d="M9 0.5 L11 5.5 L15.5 6 L12 9 L13 14.5 L8.5 11.5 L3 14 L5 9 L0.5 6 L6 5.5 Z" fill="#2a9ae8" stroke="#1a6ab8" stroke-width="0.6"/></svg>
<div class="ln" style="top:434px"></div>
<div class="hd" style="left:9px;top:443px">Type de pièce</div>
<svg class="chev" style="top:444px" width="12" height="8" viewBox="0 0 12 8"><path d="M1 7 L6 2 L11 7" fill="none" stroke="#333" stroke-width="1.5"/></svg>
<div class="rad radon" style="top:463px"></div>
<div class="lt cp" style="left:25px;top:464px">PROJECT</div>
<div class="rad" style="top:487px;border-color:#444"></div>
<div class="lt cp" style="left:25px;top:488px">STANDARD</div>
<div class="ln" style="top:512px"></div>
<div class="hd" style="left:9px;top:521px">PROJET</div>
<svg class="chev" style="top:522px" width="12" height="8" viewBox="0 0 12 8"><path d="M1 7 L6 2 L11 7" fill="none" stroke="#333" stroke-width="1.5"/></svg>
<div class="lt cp" style="left:9px;top:541px;color:#e8101a">PROJECT_NAME *</div>
<div class="tb" style="top:541px"></div><div class="lt" style="left:165px;top:544px">Visiativ Project</div>
<div class="lt cp" style="left:9px;top:569px;color:#e8101a">PRODUCT_NUMBER *</div>
<div class="tb" style="top:569px"></div><div class="lt" style="left:165px;top:572px">1234</div>
<div class="lt cp" style="left:9px;top:597px">COMPONENT_NUMBER</div>
<div class="tb tbg" style="top:597px;left:159px;width:140px"></div><div class="lt" style="left:164px;top:600px">071</div>
<div class="a" style="left:309px;top:597px;width:58px;height:30px;border:1px solid #e0e0e0;border-radius:3px;background:#f7f7f7"></div>
<div class="lt" style="left:320px;top:606px;color:#8a8a8a">Indicer</div>
<div class="lt cp" style="left:9px;top:638px">CLIENT</div>
<div class="tb" style="top:637px"></div><div class="lt" style="left:165px;top:640px">AXB</div>
<div class="lt cp" style="left:9px;top:666px">TRAITEMENT</div>
<div class="tb tbg" style="top:666px"></div>
<div class="lt cp" style="left:9px;top:694px">ANNEE</div>
<div class="tb tbg" style="top:694px"></div><div class="lt" style="left:165px;top:697px">26</div>
<div class="lt cp" style="left:9px;top:722px">FILE_NAME</div>
<div class="tb tbg" style="top:722px"></div><div class="lt" style="left:165px;top:725px">PR-Visiativ Project-1234-071</div>
<div class="ln" style="top:751px"></div>
<div class="hd" style="left:9px;top:760px">Groupe Conditionnel</div>
<svg class="chev" style="top:760px" width="12" height="8" viewBox="0 0 12 8"><path d="M1 1 L6 6 L11 1" fill="none" stroke="#333" stroke-width="1.5"/></svg>
<div class="ln" style="top:783px"></div>
<div class="hd" style="left:9px;top:792px">Favoris</div>
<svg class="chev" style="top:793px" width="12" height="8" viewBox="0 0 12 8"><path d="M1 7 L6 2 L11 7" fill="none" stroke="#333" stroke-width="1.5"/></svg>
<div class="a" style="left:9px;top:812px;width:314px;height:20px;background:#fcfcfc;border:1px solid #cfcfcf"></div>
<svg style="left:308px;top:819px" width="10" height="6" viewBox="0 0 10 6"><path d="M1 1 L5 5 L9 1" fill="none" stroke="#555" stroke-width="1"/></svg>
<div class="a" style="left:332px;top:811px;width:24px;height:24px;background:#f0f0f0;border:1px solid #888"></div>
<svg style="left:335px;top:813px" width="20" height="20" viewBox="0 0 20 20"><path d="M9 1 L11.5 6 L17 6.5 L13 10 L14 16 L9 13 L4 15.5 L5 10 L1 6.5 L6.5 6 Z" fill="#3a9ae0" stroke="#1a4a7a" stroke-width="0.8"/><path d="M15 11 V19 M11 15 H19" stroke="#1a9a2a" stroke-width="2.5"/></svg>
<div class="ln" style="top:845px"></div>
<div class="hd" style="left:9px;top:854px">Options</div>
<svg class="chev" style="top:855px" width="12" height="8" viewBox="0 0 12 8"><path d="M1 7 L6 2 L11 7" fill="none" stroke="#333" stroke-width="1.5"/></svg>
<div class="a" style="left:9px;top:875px;width:13px;height:13px;border:1px solid #333;border-radius:2px;background:#fff"></div>
<div class="lt" style="left:25px;top:875px">Exclure de la coupe</div>
<div class="lt" style="left:9px;top:898px">Propriétés existantes:</div>
<div class="a" style="left:248px;top:898px;width:103px;height:21px;background:#fff;border:1px solid #cfcfcf;border-radius:3px"></div>
<div class="lt" style="left:273px;top:903px">Supprimer</div>
<div class="ln" style="top:930px"></div>
<div class="hd" style="left:9px;top:939px">Configuration</div>
<svg class="chev" style="top:941px" width="12" height="8" viewBox="0 0 12 8"><path d="M1 7 L6 2 L11 7" fill="none" stroke="#333" stroke-width="1.5"/></svg>
<div class="rad radon" style="top:959px"></div>
<div class="lt" style="left:25px;top:960px">Liées au document</div>
<div style="position:absolute;left:0;top:980px;width:390px;height:13px;overflow:hidden">
<div class="rad" style="top:3px;border-color:#444"></div>
<div class="lt" style="left:25px;top:3px">Cette Configuration</div>
</div>
<div class="a" style="left:0;top:993px;width:402px;height:2px;background:#c8c8c8"></div>
<div class="a" style="left:195px;top:993px;width:10px;height:2px;background:#999"></div>

<!-- ===== GRAPHICS AREA ===== -->
<div class="a" style="left:402px;top:553px;width:9px;height:40px;background:#f7f7f7;border:1px solid #a0a0a0;border-left:none"></div>
<div class="a" style="left:403px;top:569px;width:6px;height:6px;border-radius:50%;background:#ddd;border:1px solid #888"></div>
<!-- window controls -->
<svg style="left:1437px;top:158px" width="13" height="14" viewBox="0 0 13 14"><rect x="0.5" y="0.5" width="12" height="13" fill="none" stroke="#999"/><path d="M3 7 L6 4 V10 Z" fill="#999"/><path d="M3.5 1 V13" stroke="#999"/></svg>
<svg style="left:1464px;top:158px" width="13" height="14" viewBox="0 0 13 14"><rect x="0.5" y="0.5" width="12" height="13" fill="none" stroke="#999"/><path d="M10 7 L7 4 V10 Z" fill="#999"/><path d="M9.5 1 V13" stroke="#999"/></svg>
<div class="a" style="left:1491px;top:169px;width:10px;height:2px;background:#999"></div>
<svg style="left:1515px;top:158px" width="15" height="14" viewBox="0 0 15 14"><rect x="0.5" y="4.5" width="9" height="9" fill="none" stroke="#999"/><path d="M4.5 4.5 V0.5 H14.5 V9.5 H9.5" fill="none" stroke="#999"/></svg>
<svg style="left:1542px;top:159px" width="12" height="12" viewBox="0 0 12 12"><path d="M0.5 0.5 L11.5 11.5 M11.5 0.5 L0.5 11.5" stroke="#999" stroke-width="1.2"/></svg>
<svg style="left:1465px;top:186px" width="29" height="23" viewBox="0 0 29 23"><path d="M2 12 L10 20 L27 3" fill="none" stroke="#c6e4bf" stroke-width="6"/></svg>
<svg style="left:1509px;top:214px" width="26" height="26" viewBox="0 0 26 26"><path d="M3 3 L23 23 M23 3 L3 23" stroke="#f2c4c4" stroke-width="6"/></svg>
<!-- heads-up view toolbar -->
<svg style="left:821px;top:155px" width="20" height="19" viewBox="0 0 20 19"><circle cx="12" cy="7.5" r="6.5" fill="#f4f8fb" stroke="#777" stroke-width="1.2"/><path d="M12 3 L10.5 5 H13.5 Z M12 12 L10.5 10 H13.5 Z M7.5 7.5 L9.5 6 V9 Z M16.5 7.5 L14.5 6 V9 Z" fill="#555"/><path d="M7.5 12 L1.5 18" stroke="#3a8ac0" stroke-width="3" stroke-linecap="round"/></svg>
<svg style="left:847px;top:155px" width="20" height="19" viewBox="0 0 20 19"><rect x="7.5" y="0.5" width="12" height="12" fill="none" stroke="#555" stroke-dasharray="2 1.5"/><circle cx="11" cy="8.5" r="6" fill="#f4f8fb" stroke="#777" stroke-width="1.2"/><path d="M6.5 13 L1.5 18" stroke="#3a8ac0" stroke-width="3" stroke-linecap="round"/></svg>
<svg style="left:874px;top:155px" width="20" height="19" viewBox="0 0 20 19"><path d="M3 12 L13 2 L18 5 L9 15 Z" fill="#e8e8e8" stroke="#666" stroke-width="1"/><ellipse cx="4" cy="13.5" rx="3" ry="3.5" fill="#ddd" stroke="#666"/><path d="M10 14 H19 M13 11 L10 14 L13 17" fill="none" stroke="#3a8ac0" stroke-width="2.2"/></svg>
<svg style="left:900px;top:155px" width="19" height="18" viewBox="0 0 19 18"><path d="M0.5 4 C0.5 0 18.5 0 18.5 4 V14 C18.5 17 14 17 14 17 V6 C14 3 5 3 5 6 V17 C5 17 0.5 17 0.5 14 Z" fill="#4a8ab8" stroke="#333" stroke-width="0.8"/><path d="M1.5 7 L4 5 M1.5 11 L4 9 M1.5 15 L4 13 M15 7 L17.5 5 M15 11 L17.5 9 M15 15 L17.5 13" stroke="#bde" stroke-width="0.8"/><path d="M5 6 C5 3 14 3 14 6 V17" fill="#eee" stroke="#333" stroke-width="0.8"/></svg>
<svg style="left:926px;top:155px" width="19" height="19" viewBox="0 0 19 19"><path d="M0.5 5 L5 0.5 H18.5 V14 L14 18.5 H0.5 Z" fill="#fff" stroke="#555" stroke-width="0.9"/><rect x="0.5" y="5" width="13.5" height="13.5" fill="#7ab8e0" stroke="#555" stroke-width="0.9"/><path d="M14 5 L18.5 0.5 M10 3 L12 1.5 M16 9 V11" stroke="#555" stroke-width="0.9"/></svg>
<div class="dd" style="left:951px;top:164px;border-top-color:#999"></div>
<svg style="left:967px;top:155px" width="18" height="19" viewBox="0 0 18 19"><path d="M0.5 4 L6 0.5 H17.5 V15 L12 18.5 H0.5 Z" fill="#cfe6f5" stroke="#555" stroke-width="0.9"/><path d="M0.5 4 H12 V18.5 M12 4 L17.5 0.5" fill="none" stroke="#555" stroke-width="0.9"/><rect x="1" y="4.5" width="5" height="13.5" fill="#6aaee0"/><rect x="12.5" y="2" width="4.5" height="13" fill="#fff"/></svg>
<div class="dd" style="left:991px;top:164px;border-top-color:#999"></div>
<div class="a" style="left:1002px;top:152px;width:41px;height:26px;border:1px solid #999;background:#fff"></div>
<div class="a" style="left:1003px;top:153px;width:26px;height:24px;background:#c4c4c4;border-right:1px solid #999"></div>
<svg style="left:1006px;top:157px" width="20" height="16" viewBox="0 0 20 16"><path d="M1 8 C5 2 15 2 19 8 C15 14 5 14 1 8 Z" fill="#fff" stroke="#333" stroke-width="1"/><circle cx="10" cy="8" r="3.8" fill="#111"/><path d="M10 0 V16" stroke="#111" stroke-width="1.2"/></svg>
<div class="dd" style="left:1033px;top:164px;border-top-color:#333"></div>
<svg style="left:1046px;top:155px" width="20" height="20" viewBox="0 0 20 20"><circle cx="8.5" cy="8.5" r="8" fill="#e33"/><path d="M8.5 8.5 L0.5 8.5 A8 8 0 0 1 8.5 0.5 Z" fill="#3a7ad0"/><path d="M8.5 8.5 L0.5 8.5 A8 8 0 0 0 8.5 16.5 Z" fill="#3aaa3a"/><path d="M8.5 8.5 V16.5 A8 8 0 0 0 16.5 8.5 Z" fill="#f0d020"/><path d="M9 19 L11 14 L18 7 L20 9 L13 16 Z" fill="#f5c040" stroke="#555" stroke-width="0.7"/></svg>
<svg style="left:1071px;top:155px" width="20" height="20" viewBox="0 0 20 20"><circle cx="10" cy="8" r="8" fill="#e33"/><path d="M10 8 L2 8 A8 8 0 0 1 10 0 Z" fill="#3a7ad0"/><path d="M10 8 L2 8 A8 8 0 0 0 10 16 Z" fill="#3aaa3a"/><path d="M10 8 V16 A8 8 0 0 0 18 8 Z" fill="#f0d020"/><rect x="0" y="13" width="20" height="7" fill="#111"/><path d="M2 15 H4 M7 15 H9 M12 15 H14 M17 15 H19 M4.5 18 H6.5 M9.5 18 H11.5 M14.5 18 H16.5" stroke="#fff" stroke-width="1.2"/></svg>
<div class="dd" style="left:1097px;top:164px;border-top-color:#999"></div>
<svg style="left:1112px;top:156px" width="19" height="18" viewBox="0 0 19 18"><rect x="0.5" y="0.5" width="18" height="12" fill="#eee" stroke="#555"/><path d="M9.5 13 V16 M5 16.5 H14" stroke="#555" stroke-width="1.5"/></svg>
<div class="dd" style="left:1137px;top:164px;border-top-color:#999"></div>
<!-- tree -->
<svg style="left:409px;top:182px" width="6" height="9" viewBox="0 0 6 9"><path d="M0.5 0.5 L5.5 4.5 L0.5 8.5 Z" fill="#222"/></svg>
<svg style="left:427px;top:178px" width="18" height="18" viewBox="0 0 18 18"><path d="M0.5 8 L5 5.5 L9 7 V12 L17 8 V13 L9 17.5 L0.5 13 Z" fill="#f5d020" stroke="#6a5500" stroke-width="0.8"/><path d="M9 4 L13 2 L17 4 V9 L13 11 L9 9 Z" fill="#6cb4e0" stroke="#1f4f7b" stroke-width="0.8"/><path d="M9 4 L13 6 L17 4 M13 6 V11" fill="none" stroke="#1f4f7b" stroke-width="0.8"/></svg>
<div class="t" style="left:449px;top:181px;letter-spacing:0.02px">Abfan_Robot-finished (De...</div>
<!-- triad -->
<svg style="left:414px;top:900px" width="64" height="60" viewBox="0 0 64 60"><text x="27" y="12" font-family="Liberation Sans" font-size="7" fill="#2a9a2a">Y</text><path d="M30 39 V20" stroke="#4ab04a" stroke-width="3"/><path d="M26 22 C26 16 34 16 34 22 Z" fill="#1a7a1a"/><path d="M30 39 L47 48" stroke="#b02020" stroke-width="3"/><path d="M44 44 L50 50 L43 50 Z" fill="#b02020"/><path d="M30 39 L12 48" stroke="#1a2ab0" stroke-width="3"/><path d="M15 44 L9 50 L16 50 Z" fill="#1a2ab0"/><text x="4" y="54" font-family="Liberation Sans" font-size="7" fill="#2a3ad0">Z</text><text x="52" y="54" font-family="Liberation Sans" font-size="7" fill="#e04040">X</text></svg>

<!-- ===== RIGHT PANEL ===== -->
<style>
.rh{position:absolute;left:1591px;white-space:nowrap;font-size:14px;line-height:16px;color:#505050;letter-spacing:-0.1px}
.rl{position:absolute;left:1580px;width:314px;height:1px;background:#8a8a8a}
.rc{position:absolute;left:1876px}
.bt{position:absolute;left:1606px;width:261px;height:22px;background:#e1e1e1;border:1px solid #c4c4c4;border-radius:3px;box-shadow:inset 0 0 0 1px #f4f4f4;text-align:center;font-size:11.5px;line-height:20px;color:#111;letter-spacing:0.2px}
.stab{position:absolute;left:1540px;width:27px;height:25px;background:#d4d4d4;border:1px solid #999}
</style>
<div class="a" style="left:1566px;top:150px;width:354px;height:864px;background:#f7f7f7;border-left:1px solid #8a8a8a"></div>
<div class="a" style="left:1567px;top:150px;width:353px;height:22px;background:#a9aaae;border-bottom:2px solid #222"></div>
<svg style="left:1576px;top:154px" width="12" height="10" viewBox="0 0 12 10"><path d="M5.5 1 L1.5 5 L5.5 9 M10.5 1 L6.5 5 L10.5 9" fill="none" stroke="#111" stroke-width="2"/></svg>
<div class="a" style="left:1700px;top:153px;font-size:12px;font-weight:bold;line-height:14px;color:#111">myCADtools</div>
<svg style="left:1881px;top:152px" width="16" height="16" viewBox="0 0 18 18"><path d="M7.5 0.5 H10.5 L11 3 L13 4 L15 2.5 L16.5 4.5 L15 6.5 L15.5 8 L17.5 8.5 V10.5 L15.5 11 L15 12.5 L16.5 14.5 L14.5 16 L12.5 15 L11 15.5 L10.5 17.5 H7.5 L7 15.5 L5.5 15 L3.5 16.5 L1.5 14.5 L3 12.5 L2.5 11 L0.5 10.5 V8 L2.5 7.5 L3 6 L1.5 4 L3.5 2 L5.5 3 L7 2.5 Z" fill="#f4f4f4" stroke="#222" stroke-width="1.2"/><circle cx="9" cy="9" r="2.8" fill="#a9aaae" stroke="#222" stroke-width="1.2"/></svg>
<svg style="left:1902px;top:152px" width="14" height="15" viewBox="0 0 14 15"><path d="M8 1 L13 6 L11.5 7 L9.5 6.5 L7 9 L7.5 11 L6.5 12 L2 7.5 L3 6.5 L5 7 L7.5 4.5 L7 2.5 Z M4 10 L1 14" fill="#222" stroke="#222" stroke-width="1.2"/></svg>
<!-- toolbar -->
<svg style="left:1575px;top:176px" width="21" height="18" viewBox="0 0 21 18"><path d="M10.5 0 V3" stroke="#2a7ad8" stroke-width="1.5"/><circle cx="10.5" cy="1" r="1" fill="#2a7ad8"/><rect x="2" y="3.5" width="17" height="13" rx="6" fill="#fff" stroke="#2a7ad8" stroke-width="1.3"/><rect x="4" y="6" width="13" height="8" rx="4" fill="#3a8ae0"/><circle cx="8" cy="10" r="1.3" fill="#fff"/><circle cx="13" cy="10" r="1.3" fill="#fff"/><path d="M0.5 8 V12 M20.5 8 V12" stroke="#2a7ad8" stroke-width="1.5"/></svg>
<svg style="left:1604px;top:176px" width="17" height="17" viewBox="0 0 17 17"><rect x="0" y="0" width="6" height="7" fill="#7ab8e0"/><path d="M7 3 H11 V5 H16 V10 H7 Z" fill="#2a8ad0" stroke="#1f5f8b" stroke-width="0.6"/><path d="M5 16 C3 13 2 10 4 9 L5 6 C6 5 7 6 7 7 L8 6 C9 5 10 6 10 7 L11 8 C12 8 12 10 11 12 L9 16 Z" fill="#fff" stroke="#555" stroke-width="0.8"/></svg>
<svg style="left:1631px;top:176px" width="17" height="17" viewBox="0 0 19 18"><path d="M7 4 L13 1 L18 9 L11 14 Z" fill="#e8e8e8" stroke="#333" stroke-width="1.3"/><path d="M13 1 L15 0 L17 4" fill="none" stroke="#333" stroke-width="1.2"/><path d="M6 6 C2 8 1 14 4 17" fill="none" stroke="#1f5f8b" stroke-width="1.6"/></svg>
<svg style="left:1658px;top:177px" width="16" height="16" viewBox="0 0 16 16"><rect x="5.5" y="1.5" width="10" height="13" fill="#e8e8e8" stroke="#1f3f5b" stroke-width="1"/><path d="M8 5 H13 M8 8 H13 M8 11 H13" stroke="#1f3f5b" stroke-width="1.3"/><path d="M0.5 4 C0.5 0 6 0 6 3.5 C6 6 3 6 3 9 V11" fill="none" stroke="#1f5f8b" stroke-width="1.5"/><circle cx="3" cy="14" r="1.3" fill="#2a7ad8"/></svg>
<svg style="left:1684px;top:176px" width="18" height="18" viewBox="0 0 17 17"><circle cx="2" cy="2" r="1.5" fill="none" stroke="#ccc"/><circle cx="2" cy="8" r="1.5" fill="none" stroke="#ccc"/><circle cx="2" cy="14" r="1.5" fill="none" stroke="#ccc"/><path d="M5 2 H16 M5 8 H16 M5 14 H12 M12 13 L16 13 L14 16 Z" stroke="#ccc" fill="#ccc"/></svg>
<div class="a" style="left:1719px;top:177px;width:2px;height:16px;background:#d0d0d0"></div>
<svg style="left:1739px;top:178px" width="15" height="15" viewBox="0 0 16 16"><circle cx="8" cy="8" r="7" fill="#fff" stroke="#334" stroke-width="1.1"/><path d="M5.5 6 C5.5 3 10.5 3 10.5 6 C10.5 8 8 8 8 10" fill="none" stroke="#1f6aa8" stroke-width="1.5"/><circle cx="8" cy="12" r="0.9" fill="#1f6aa8"/></svg>
<!-- inner -->
<div class="a" style="left:1572px;top:202px;width:1px;height:812px;background:#e0e0e0"></div>
<div class="a" style="left:1573px;top:229px;width:327px;height:1px;background:#ececec"></div>
<svg style="left:1579px;top:206px" width="3" height="15" viewBox="0 0 3 15"><g fill="#999"><rect x="0" y="0" width="2" height="2"/><rect x="0" y="4" width="2" height="2"/><rect x="0" y="8" width="2" height="2"/><rect x="0" y="12" width="2" height="2"/></g></svg>
<svg style="left:1589px;top:207px" width="16" height="16" viewBox="0 0 18 18"><path d="M7.5 0.5 H10.5 L11 3 L13 4 L15 2.5 L16.5 4.5 L15 6.5 L15.5 8 L17.5 8.5 V10.5 L15.5 11 L15 12.5 L16.5 14.5 L14.5 16 L12.5 15 L11 15.5 L10.5 17.5 H7.5 L7 15.5 L5.5 15 L3.5 16.5 L1.5 14.5 L3 12.5 L2.5 11 L0.5 10.5 V8 L2.5 7.5 L3 6 L1.5 4 L3.5 2 L5.5 3 L7 2.5 Z" fill="#fff" stroke="#333" stroke-width="1.2"/><circle cx="9" cy="9" r="2.8" fill="#fff" stroke="#333" stroke-width="1.2"/></svg>
<div class="a" style="left:1900px;top:202px;width:18px;height:753px;background:#efefef"></div>
<div class="a" style="left:1909px;top:219px;width:3px;height:664px;background:#777"></div>
<!-- sections -->
<div class="rl" style="top:239px"></div>
<div class="rh" style="top:245px">Questions sur myCADtools IA</div>
<svg class="rc" style="top:246px" width="12" height="8" viewBox="0 0 12 8"><path d="M1 7 L6 2 L11 7" fill="none" stroke="#333" stroke-width="1.5"/></svg>
<div class="a" style="left:1591px;top:278px;width:282px;height:77px;background:#fff;border:1px solid #a8a8a8;border-radius:11px"></div>
<div class="a" style="left:1636px;top:303px;font-size:17px;font-style:italic;line-height:20px;color:#a8a8a8">Tapez votre question</div>
<div class="a" style="left:1603px;top:335px;font-size:12px;line-height:14px;color:#111">0 / 2000</div>
<svg style="left:1845px;top:327px" width="26" height="25" viewBox="0 0 26 25"><path d="M1 1 L25 12.5 L1 24 L5 12.5 Z M5 12.5 H25" fill="none" stroke="#777" stroke-width="1.6" stroke-linejoin="round"/></svg>
<div class="rl" style="top:377px"></div>
<div class="rh" style="top:384px">myCADtools</div>
<svg class="rc" style="top:384px" width="12" height="8" viewBox="0 0 12 8"><path d="M1 7 L6 2 L11 7" fill="none" stroke="#333" stroke-width="1.5"/></svg>
<div class="bt" style="top:410px">myCADtools</div>
<svg style="left:1610px;top:412px" width="16" height="17" viewBox="0 0 16 17"><circle cx="8" cy="8" r="6.5" fill="none" stroke="#7a2ae0" stroke-width="2"/><rect x="4.5" y="4.5" width="7" height="7" fill="#7a2ae0"/><path d="M5.5 6 H10.5 M5.5 8.5 H10.5" stroke="#fff"/><circle cx="13" cy="14" r="2.5" fill="none" stroke="#7a2ae0" stroke-width="1.5"/></svg>
<div class="rl" style="top:454px"></div>
<div class="rh" style="top:461px">Aides myCADtools</div>
<svg class="rc" style="top:461px" width="12" height="8" viewBox="0 0 12 8"><path d="M1 7 L6 2 L11 7" fill="none" stroke="#333" stroke-width="1.5"/></svg>
<div class="bt" style="top:486px">SmartProperties</div>
<div class="bt" style="top:513px">SmartBom</div>
<div class="bt" style="top:540px">Integration</div>
<div class="bt" style="top:567px">BatchConverter</div>
<div class="bt" style="top:594px">ProjectManager</div>
<div class="bt" style="top:621px">SheetMetalManufacturing</div>
<div class="bt" style="top:648px">CuttingOptimization</div>
<!-- button icons -->
<svg style="left:1609px;top:489px" width="17" height="17" viewBox="0 0 18 18"><path d="M15 3.5 C13 0.5 6 0.5 5 4 C4 7 12 8 11 11.5 C10 15 4 15 2.5 12.5" fill="none" stroke="#2a3c4a" stroke-width="4.5" stroke-linecap="round"/><path d="M15 3.5 C13 0.5 6 0.5 5 4 C4 7 12 8 11 11.5 C10 15 4 15 2.5 12.5" fill="none" stroke="#5ba3c9" stroke-width="2.5" stroke-linecap="round"/></svg>
<svg style="left:1609px;top:516px" width="17" height="17" viewBox="0 0 18 17"><rect x="0.5" y="0.5" width="14" height="14" fill="#f4f4f4" stroke="#444"/><rect x="1" y="1" width="13" height="3" fill="#1f5f8b"/><path d="M1 6 H14 M1 9 H14 M5 4 V9 M10 4 V9" stroke="#666" stroke-width="0.8"/><path d="M1 14 L6 10 L10 13" fill="none" stroke="#666"/><circle cx="13.5" cy="12" r="3.5" fill="#3c8fc2" stroke="#444" stroke-width="0.8"/></svg>
<svg style="left:1609px;top:543px" width="16" height="17" viewBox="0 0 16 17"><path d="M1 3 L4.5 1 L8 3 L11.5 1 L15 3 V8 L11.5 10 L8 8 L4.5 10 L1 8 Z" fill="#777" stroke="#222" stroke-width="0.8"/><path d="M4.5 10 L8 8 L11.5 10 V15 L8 17 L4.5 15 Z" fill="#5ba3c9" stroke="#222" stroke-width="0.8"/></svg>
<svg style="left:1609px;top:570px" width="17" height="17" viewBox="0 0 17 17"><circle cx="8.5" cy="8.5" r="8" fill="#4a8db8" stroke="#444" stroke-width="1"/><path d="M4 9 C4 5 9 3 12 6 M12 3 V6.5 H8.5 M13 8 C13 12 8 14 5 11" fill="none" stroke="#aaa" stroke-width="1.6"/></svg>
<svg style="left:1609px;top:597px" width="17" height="17" viewBox="0 0 18 17"><path d="M0.5 7 V2 H3 L4 0.5 H6 V7 Z" fill="#fff" stroke="#333"/><path d="M10.5 7 V2 H13 L14 0.5 H16 V7 Z" fill="#fff" stroke="#e0c020"/><path d="M1 8 V16 M1 10 H3 M1 15 H3" stroke="#333"/><path d="M4 12 V9 L6 7.5 L8 9 V12 Z M4 16 V13 H8 V16 Z" fill="#fff" stroke="#333" stroke-width="0.8"/><path d="M9 14 C12 14 14 12 16 9 M13 9 H16.5 V12" fill="none" stroke="#2f86b8" stroke-width="1.8"/></svg>
<svg style="left:1609px;top:624px" width="16" height="16" viewBox="0 0 18 18"><path d="M0.5 0.5 H12 L17.5 6 V17.5 H0.5 Z" fill="#f4f4f4" stroke="#333" stroke-width="1"/><path d="M3 3 H9 V9 H14 V15 H3 Z M3 9 H9 M3 6 H9" fill="none" stroke="#2f86b8" stroke-width="1.6"/></svg>
<svg style="left:1609px;top:651px" width="16" height="17" viewBox="0 0 16 17"><rect x="0" y="0" width="16" height="6" fill="#333"/><rect x="1" y="1" width="6" height="4" fill="#5ba3c9"/><rect x="8" y="1" width="7" height="4" fill="#5ba3c9"/><rect x="0" y="7" width="16" height="6" fill="#333"/><path d="M2 8 V12 M5 8 V12 M8 8 V12 M11 8 V12 M14 8 V12" stroke="#e0a020" stroke-width="1.2"/><path d="M0 15.5 H16" stroke="#999" stroke-dasharray="1 1"/></svg>
<div class="rl" style="top:708px"></div>
<div class="rh" style="top:715px">Liens utiles</div>
<svg class="rc" style="top:716px" width="12" height="8" viewBox="0 0 12 8"><path d="M1 7 L6 2 L11 7" fill="none" stroke="#333" stroke-width="1.5"/></svg>
<div class="bt" style="top:740px">Trainings myCADtools</div>
<div class="bt" style="top:767px">Présentation des outils</div>
<div class="bt" style="top:794px">Forum</div>
<div class="rl" style="top:854px"></div>
<div class="rh" style="top:861px">FindDocuments</div>
<svg class="rc" style="top:862px" width="12" height="8" viewBox="0 0 12 8"><path d="M1 7 L6 2 L11 7" fill="none" stroke="#333" stroke-width="1.5"/></svg>
<div class="a" style="left:1591px;top:894px;font-size:11px;line-height:13px;color:#111">Valeur :</div>
<div class="a" style="left:1693px;top:892px;width:184px;height:21px;background:#fff;border:1px solid #e4e4e4;border-bottom:1px solid #aaa"></div>
<div class="a" style="left:1591px;top:924px;font-size:11px;line-height:13px;color:#111">Type de fichiers :</div>
<div class="a" style="left:1692px;top:922px;width:186px;height:22px;background:#fff;border:1px solid #555"></div>
<div class="a" style="left:1699px;top:926px;font-size:11px;line-height:13px;color:#111">sldprt,sldasm,slddrw</div>
<svg style="left:1861px;top:930px" width="10" height="6" viewBox="0 0 10 6"><path d="M1 1 L5 5 L9 1" fill="none" stroke="#111" stroke-width="1.3"/></svg>
<div class="a" style="left:1576px;top:953px;width:342px;height:3px;background:#777"></div>
<svg style="left:1580px;top:990px" width="15" height="15" viewBox="0 0 15 15"><circle cx="2.5" cy="12.5" r="2.2" fill="#111"/><path d="M1 6.5 A7.5 7.5 0 0 1 8.5 14 M1 1.5 A12.5 12.5 0 0 1 13.5 14" fill="none" stroke="#111" stroke-width="2.3"/></svg>
<div class="a" style="left:1601px;top:992px;font-size:11.3px;line-height:13px;color:#111;text-decoration:underline">Les Matinales de la Simulation</div>
<div class="a" style="left:1566px;top:1012px;width:354px;height:2px;background:#999"></div>
<!-- side tabs -->
<div class="stab" style="top:225px;background:#fff;border-right:none;height:24px"></div>
<div class="stab" style="top:248px"></div>
<div class="stab" style="top:272px"></div>
<div class="stab" style="top:296px"></div>
<div class="stab" style="top:320px"></div>
<div class="stab" style="top:344px"></div>
<div class="stab" style="top:368px"></div>
<div class="stab" style="top:392px"></div>
<svg style="left:1544px;top:228px" width="19" height="19" viewBox="0 0 19 19"><circle cx="9.5" cy="9.5" r="9.5" fill="#5a12c8"/><text x="9.5" y="13" font-family="Liberation Sans" font-size="10" font-weight="bold" text-anchor="middle" fill="#fff">my</text></svg>
<svg style="left:1543px;top:251px" width="19" height="18" viewBox="0 0 18 18"><path d="M1 8 L9 1 L17 8" fill="none" stroke="#1f5f8b" stroke-width="2"/><path d="M3 8 V17 H15 V8" fill="#fafafa" stroke="#333" stroke-width="1"/><rect x="8" y="11" width="3" height="6" fill="#fff" stroke="#333" stroke-width="1"/></svg>
<svg style="left:1545px;top:275px" width="15" height="19" viewBox="0 0 15 19"><path d="M0.5 5 L3 2 H5 L8 0.5 H11 L14.5 3 V16 L12 18.5 H0.5 Z" fill="#fafafa" stroke="#333" stroke-width="1"/><path d="M0.5 5 H3 V18.5 M3 5 L6 2 M6 3.5 V17 M6 3.5 L9 1.5 M9 3 V16" fill="none" stroke="#333" stroke-width="0.8"/></svg>
<svg style="left:1543px;top:300px" width="19" height="16" viewBox="0 0 19 16"><path d="M0.5 1 H6 L7 3 H14 V6 H4 L0.5 15 Z" fill="#ddd" stroke="#333" stroke-width="1"/><path d="M4 6 H18.5 L15 15.5 H0.5 Z" fill="#f4f4f4" stroke="#333" stroke-width="1"/></svg>
<svg style="left:1544px;top:324px" width="17" height="17" viewBox="0 0 19 18"><rect x="0.5" y="0.5" width="18" height="17" fill="#fff" stroke="#333" stroke-width="1.2"/><rect x="3" y="3" width="6" height="3" fill="#f0c020"/><rect x="11" y="3" width="4" height="3" fill="#f0c020"/><path d="M3 14 V10 H5 V8 H7 V10 H9 V14 Z" fill="#f0c020"/><rect x="13" y="9" width="3" height="6" fill="#999"/></svg>
<svg style="left:1544px;top:347px" width="17" height="18" viewBox="0 0 18 19"><circle cx="9" cy="9.5" r="8.5" fill="#e32"/><path d="M9 9.5 L0.5 9.5 A8.5 8.5 0 0 1 9 1 Z" fill="#2a7ad0"/><path d="M9 9.5 L0.5 9.5 A8.5 8.5 0 0 0 9 18 Z" fill="#3aaa3a"/><path d="M9 9.5 L9 18 A8.5 8.5 0 0 0 17.5 9.5 Z" fill="#f0d020"/></svg>
<svg style="left:1544px;top:372px" width="17" height="17" viewBox="0 0 18 18"><rect x="0.5" y="0.5" width="17" height="17" rx="1" fill="#fff" stroke="#222"/><rect x="1" y="1" width="16" height="2.5" fill="#4a9ad0"/><rect x="3" y="6" width="3" height="2" fill="#4a9ad0"/><rect x="3" y="10" width="3" height="2" fill="#4a9ad0"/><rect x="3" y="14" width="3" height="2" fill="#4a9ad0"/><path d="M8 7 H15 M8 11 H15 M8 15 H15" stroke="#222"/></svg>
<svg style="left:1543px;top:396px" width="19" height="18" viewBox="0 0 19 18"><path d="M6 6 H18.5 V14 H11 L8 17 V14 H6 Z" fill="#fff" stroke="#333"/><path d="M0.5 0.5 H12 V9 H5 L2 12 V9 H0.5 Z" fill="#5ab0e0" stroke="#1f5f8b"/></svg>

<!-- ===== BOTTOM ===== -->
<div class="a" style="left:382px;top:285px;width:18px;height:710px;background:#ececec"></div>
<div class="a" style="left:388px;top:303px;width:3px;height:582px;background:#777"></div>
<div class="a" style="left:0;top:996px;width:1566px;height:18px;background:#f2f2f2;border-top:1px solid #cfcfcf"></div>
<div class="a" style="left:0;top:1013px;width:1566px;height:1px;background:#888"></div>
<div class="a" style="left:0;top:997px;width:2px;height:16px;background:#6aa0b8"></div>
<div class="a" style="left:27px;top:997px;width:58px;height:16px;background:#fafafa;border-left:1px solid #888;border-right:1px solid #888;font-weight:bold;text-align:center;line-height:16px;font-size:12px">Model</div>
<div class="a" style="left:84px;top:997px;width:109px;height:16px;background:#d6d6d6;border-right:1px solid #888;text-align:center;line-height:16px;font-size:12px;letter-spacing:-0.3px">Motion Study 1</div>

</body></html>
